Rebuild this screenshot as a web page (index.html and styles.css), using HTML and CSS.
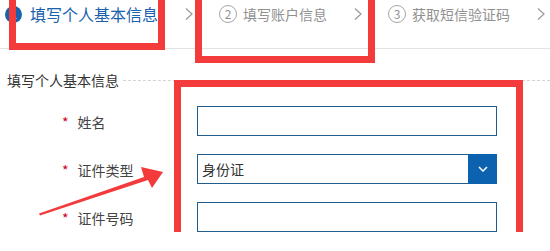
FILE: index.html
```html
<!DOCTYPE html>
<html lang="zh-CN">
<head>
    <meta charset="UTF-8">
    <meta name="viewport" content="width=device-width, initial-scale=1.0">
    <title>填写个人基本信息</title>
    <link rel="stylesheet" href="styles.css">
</head>
<body>
    <!-- Step bar -->
    <div class="steps">
        <div class="step active">
            <span class="step-num">1</span>
            <span class="step-text">填写个人基本信息</span>
        </div>
        <svg class="step-arrow" width="8" height="12" viewBox="0 0 8 12"><polyline points="1,0.5 7,6 1,11.5" /></svg>
        <div class="step">
            <span class="step-num">2</span>
            <span class="step-text">填写账户信息</span>
        </div>
        <svg class="step-arrow" width="8" height="12" viewBox="0 0 8 12"><polyline points="1,0.5 7,6 1,11.5" /></svg>
        <div class="step">
            <span class="step-num">3</span>
            <span class="step-text">获取短信验证码</span>
        </div>
        <svg class="step-arrow" width="8" height="12" viewBox="0 0 8 12"><polyline points="1,0.5 7,6 1,11.5" /></svg>
    </div>

    <!-- Form -->
    <div class="section-title">
        <span>填写个人基本信息</span>
        <span class="section-line"></span>
    </div>

    <div class="form">
        <div class="form-row">
            <label class="form-label"><span class="required">*</span>姓名</label>
            <div class="input"></div>
        </div>
        <div class="form-row">
            <label class="form-label"><span class="required">*</span>证件类型</label>
            <div class="select">
                <span class="select-value">身份证</span>
                <span class="select-btn">
                    <svg width="10" height="6" viewBox="0 0 10 6"><polyline points="1,1 5,5 9,1" /></svg>
                </span>
            </div>
        </div>
        <div class="form-row">
            <label class="form-label"><span class="required">*</span>证件号码</label>
            <div class="input"></div>
        </div>
    </div>

    <!-- Screenshot annotations -->
    <div class="marks">
        <div class="mark mark-step1"></div>
        <div class="mark mark-step2"></div>
        <div class="mark mark-fields"></div>
        <svg class="mark-arrow" width="550" height="251" viewBox="0 0 550 251">
            <polygon points="39,213.5 144,177 141,167 163,172 152,188 148,180 40,215.5" />
        </svg>
    </div>
</body>
</html>
```

FILE: styles.css
```css
body {
    margin: 0;
    padding: 0;
    position: relative;
    background: #fff;
    font-family: 'Noto Sans CJK SC', 'Noto Sans', sans-serif;
    color: #333;
    overflow: hidden;
}

/* Step bar */
.steps {
    display: flex;
    align-items: center;
    width: 545px;
    height: 28px;
    padding: 0 0 20px 5px;
    border-bottom: 1px solid #e2e2e2;
    white-space: nowrap;
}

.step {
    display: flex;
    flex-shrink: 0;
    align-items: center;
    color: #919191;
    font-size: 14px;
}

.step-num {
    width: 16px;
    height: 16px;
    border: 1px solid #a5a5a5;
    border-radius: 50%;
    font-size: 12px;
    line-height: 16px;
    text-align: center;
    margin-right: 6px;
}

.step.active {
    color: #1a61ad;
    font-size: 16px;
}

.step.active .step-num {
    width: 17px;
    height: 17px;
    border: none;
    background-color: #1a61ad;
    color: #fff;
    margin-right: 8px;
}

.step-arrow {
    flex-shrink: 0;
    margin: 0 26px 0 27px;
}

.step-arrow polyline {
    fill: none;
    stroke: #999;
    stroke-width: 1.2;
}

/* Section */
.section-title {
    display: flex;
    align-items: center;
    margin: 21px 0 0 7px;
    font-size: 14px;
    line-height: 20px;
    color: #333;
    white-space: nowrap;
}

.section-line {
    flex: 1;
    margin-left: 4px;
    border-top: 1px dashed #d4d4d4;
}

.form {
    display: flex;
    flex-direction: column;
    gap: 18px;
    margin-top: 16px;
}

.form-row {
    display: flex;
    align-items: center;
}

.form-label {
    width: 135px;
    padding-left: 62px;
    padding-top: 2px;
    font-size: 14px;
    color: #444;
    white-space: nowrap;
}

.required {
    color: #d0021b;
    margin-right: 9px;
}

.input,
.select {
    box-sizing: border-box;
    width: 300px;
    height: 30px;
    border: 1px solid #1f5d8f;
    background: #fff;
}

.select {
    display: flex;
    align-items: center;
    justify-content: space-between;
}

.select-value {
    padding-left: 4px;
    font-size: 14px;
    color: #333;
}

.select-btn {
    display: flex;
    align-items: center;
    justify-content: center;
    width: 29px;
    height: 30px;
    margin: -1px -1px -1px 0;
    background-color: #0d62b0;
}

.select-btn polyline {
    fill: none;
    stroke: #fff;
    stroke-width: 1.5;
}

/* Annotations laid over the screenshot */
.marks {
    position: absolute;
    top: 0;
    left: 0;
    width: 550px;
    height: 251px;
    pointer-events: none;
}

.mark {
    position: absolute;
    box-sizing: border-box;
    border: 7px solid #f43b3b;
}

.mark-step1 {
    left: 9px;
    top: -10px;
    width: 156px;
    height: 60px;
}

.mark-step2 {
    left: 195px;
    top: -10px;
    width: 180px;
    height: 73px;
}

.mark-fields {
    left: 174px;
    top: 80px;
    width: 349px;
    height: 163px;
}

.mark-arrow {
    position: absolute;
    top: 0;
    left: 0;
}

.mark-arrow polygon {
    fill: #f43b3b;
}
```
